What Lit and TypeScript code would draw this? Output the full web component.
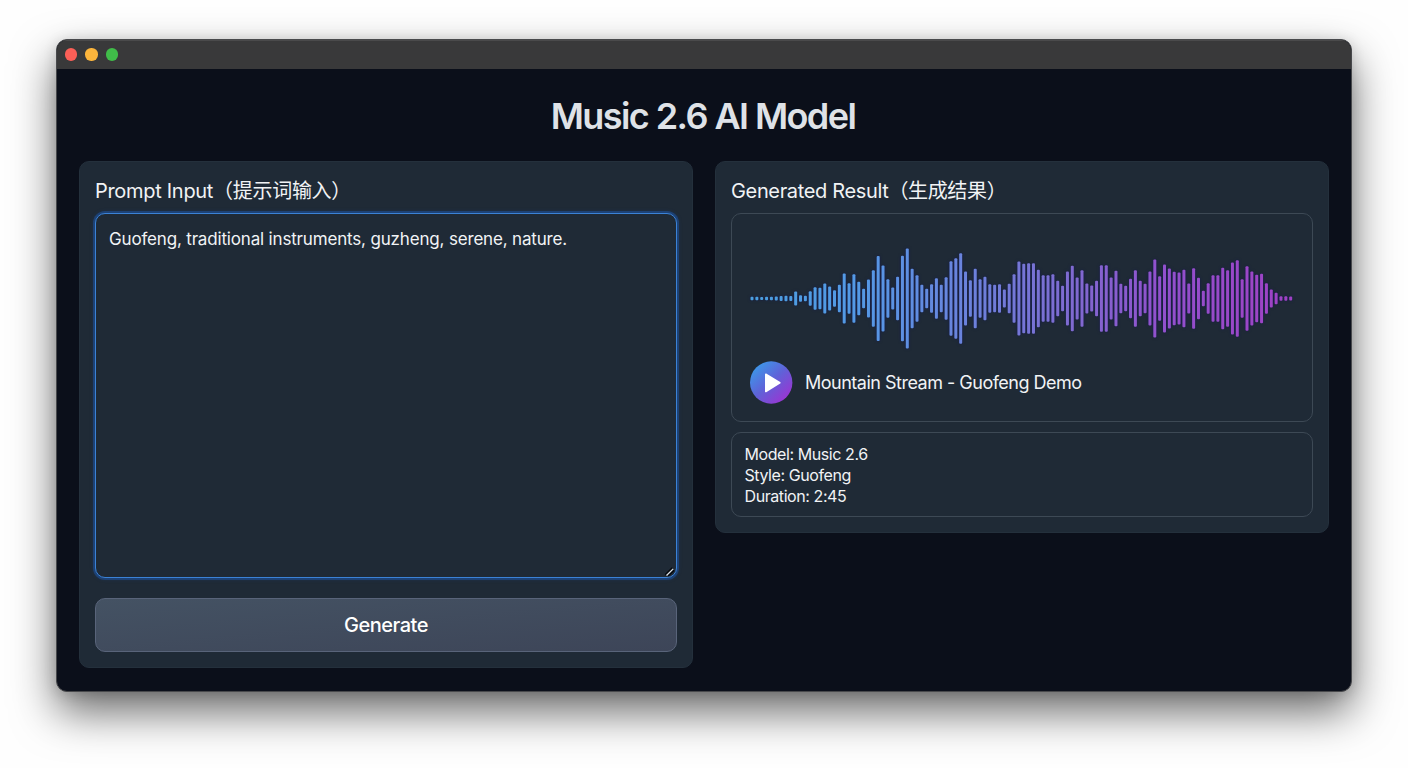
import { LitElement, html, css, svg } from 'lit';
import { customElement, property } from 'lit/decorators.js';

const PITCH = 4.853;
const BAR_WIDTH = 3;

// bar heights in thirds of a pixel
const LEVELS = [
  12, 12, 11, 12, 13, 14, 17, 19, 17, 44, 22, 18, 46, 70, 66, 92, 74, 52, 84, 152,
  94, 148, 102, 60, 116, 172, 257, 200, 118, 68, 132, 258, 302, 180, 142, 84, 60,
  88, 124, 84, 130, 226, 244, 274, 164, 112, 180, 118, 132, 88, 84, 88, 56, 90, 148,
  224, 210, 214, 214, 174, 142, 142, 148, 108, 78, 164, 198, 128, 172, 92, 80, 108,
  202, 202,
  128, 168, 90, 78, 120, 172, 108, 90, 164, 236, 136, 206, 182, 162, 158, 174, 92,
  184, 126, 48, 94, 142, 142, 186, 172, 218, 232, 118, 196, 164, 144, 150, 94, 56,
  36, 16, 16, 14,
];

@customElement('wave-form')
export class WaveForm extends LitElement {
  static styles = css`
    :host {
      display: block;
    }
    svg {
      display: block;
      overflow: visible;
      filter: drop-shadow(0 0 1.5px rgba(16, 20, 80, 0.75));
    }
  `;

  @property({ attribute: false }) levels: number[] = [];

  render() {
    return html`
      <svg width="544" height="104" viewBox="0 0 544 104">
        <defs>
          <linearGradient id="wave" gradientUnits="userSpaceOnUse" x1="0" y1="0" x2="544" y2="0">
            <stop offset="0" stop-color="#4a9fdf" />
            <stop offset="0.2" stop-color="#5499e6" />
            <stop offset="0.4" stop-color="#6b82dc" />
            <stop offset="0.6" stop-color="#8069d0" />
            <stop offset="0.75" stop-color="#9151cd" />
            <stop offset="1" stop-color="#a041c4" />
          </linearGradient>
        </defs>
        ${this.levels.map((level, i) => {
          const h = level / 3 - 0.6;
          return svg`<rect x=${i * PITCH + 0.5} y=${52.5 - h / 2} width=${BAR_WIDTH} height=${h} rx="1" fill="url(#wave)" />`;
        })}
      </svg>
    `;
  }
}

@customElement('prompt-panel')
export class PromptPanel extends LitElement {
  static styles = css`
    :host {
      display: flex;
      flex-direction: column;
      box-sizing: border-box;
      height: 507px;
      padding: 15px;
      border-radius: 10px;
      border: 1px solid #24303c;
      background: #1f2a36;
    }
    h2 {
      margin: 0;
      height: 36px;
      line-height: 28px;
      font-size: 20px;
      font-weight: 400;
      letter-spacing: -0.3px;
      white-space: nowrap;
    }
    .field {
      position: relative;
      height: 365px;
      margin-bottom: 20px;
    }
    textarea {
      display: block;
      box-sizing: border-box;
      width: 100%;
      height: 100%;
      margin: 0;
      padding: 13px;
      resize: none;
      outline: none;
      border: 1.5px solid #3b82d6;
      border-radius: 10px;
      background: #1f2a36;
      box-shadow: 0 0 0 2px rgba(28, 78, 150, 0.6), 0 0 5px rgba(30, 90, 170, 0.4);
      color: #f1f3f5;
      font: inherit;
      font-size: 17px;
      line-height: 24px;
      letter-spacing: -0.17px;
    }
    .grip {
      position: absolute;
      right: 2px;
      bottom: 1px;
    }
    button {
      height: 54px;
      padding: 0;
      border: 1px solid #59647a;
      border-radius: 10px;
      background: linear-gradient(175deg, #445263, #3d4558);
      color: #fff;
      font: inherit;
      font-size: 20px;
      font-weight: 500;
      letter-spacing: -0.5px;
    }
  `;

  render() {
    return html`
      <h2>Prompt Input（提示词输入）</h2>
      <div class="field">
        <textarea spellcheck="false">Guofeng, traditional instruments, guzheng, serene, nature.</textarea>
        <svg class="grip" width="10" height="10" viewBox="0 0 10 10" fill="none">
          <path d="M0.3 7.7 7.3 0.7M3.2 9 9 3.2" stroke="#05080c" stroke-width="1.5" />
          <path d="M1.5 8.5 8.2 1.8" stroke="#dfe5ea" stroke-width="1.2" />
        </svg>
      </div>
      <button>Generate</button>
    `;
  }
}

@customElement('result-panel')
export class ResultPanel extends LitElement {
  static styles = css`
    :host {
      display: flex;
      flex-direction: column;
      box-sizing: border-box;
      height: 372px;
      padding: 15px;
      border-radius: 10px;
      border: 1px solid #24303c;
      background: #1f2a36;
    }
    h2 {
      margin: 0;
      height: 36px;
      line-height: 28px;
      font-size: 20px;
      font-weight: 400;
      letter-spacing: -0.35px;
      white-space: nowrap;
    }
    .box {
      box-sizing: border-box;
      border: 1px solid #3d4955;
      border-radius: 10px;
    }
    .player {
      height: 209px;
      padding: 32px 18px 0;
      margin-bottom: 10px;
    }
    .track {
      display: flex;
      align-items: center;
      gap: 12px;
      margin-top: 11px;
      font-size: 18px;
      letter-spacing: -0.5px;
    }
    .track svg {
      display: block;
    }
    .info {
      height: 85px;
      padding: 11px 12.5px;
      font-size: 16px;
      line-height: 21px;
      letter-spacing: -0.42px;
    }
  `;

  render() {
    return html`
      <h2>Generated Result（生成结果）</h2>
      <div class="box player">
        <wave-form .levels=${LEVELS}></wave-form>
        <div class="track">
          <svg width="43" height="43" viewBox="0 0 43 43">
            <defs>
              <linearGradient id="play" x1="0.1" y1="0.1" x2="0.85" y2="0.9">
                <stop offset="0" stop-color="#3b9aea" />
                <stop offset="0.5" stop-color="#5f62d8" />
                <stop offset="1" stop-color="#9a35d3" />
              </linearGradient>
            </defs>
            <circle cx="21.2" cy="21.5" r="21.2" fill="url(#play)" />
            <path d="M15.8 13.2 29.8 21.8 15.8 30.5Z" fill="#fff" stroke="#fff" stroke-width="1.6" stroke-linejoin="round" />
          </svg>
          <span class="name">Mountain Stream - Guofeng Demo</span>
        </div>
      </div>
      <div class="box info">
        <div class="row">Model: Music 2.6</div>
        <div class="row">Style: Guofeng</div>
        <div class="row">Duration: 2:45</div>
      </div>
    `;
  }
}

@customElement('app-root')
export class AppRoot extends LitElement {
  static styles = css`
    :host {
      display: block;
      box-sizing: border-box;
      width: 1408px;
      height: 768px;
      padding: 39px 56px 0;
      overflow: hidden;
      background: #fefefe;
      color: #f1f3f5;
      font-family: Inter, 'Noto Sans CJK SC', sans-serif;
    }
    .window {
      box-sizing: border-box;
      height: 653px;
      overflow: hidden;
      border: 1px solid #48494c;
      border-radius: 11px;
      background: #0b0f1a;
      box-shadow: 0 20px 44px rgba(0, 0, 0, 0.58), 0 2px 14px rgba(0, 0, 0, 0.14);
    }
    .titlebar {
      display: flex;
      align-items: center;
      gap: 8px;
      box-sizing: border-box;
      height: 29px;
      padding-left: 8px;
      background: #39393a;
      box-shadow: inset 0 1px #4a4a4b;
    }
    .dot {
      width: 12.4px;
      height: 12.4px;
      border-radius: 50%;
    }
    .close {
      background: #fb5f57;
    }
    .minimize {
      background: #fcb53c;
    }
    .zoom {
      background: #40bd49;
    }
    h1 {
      margin: 0;
      height: 92px;
      line-height: 94px;
      text-align: center;
      text-indent: -2px;
      font-size: 36px;
      font-weight: 600;
      letter-spacing: -1.58px;
      color: #dfe2e7;
    }
    .columns {
      display: grid;
      grid-template-columns: 614px 614px;
      gap: 22px;
      align-items: start;
      padding-left: 22px;
    }
  `;

  render() {
    return html`
      <div class="window">
        <div class="titlebar">
          <span class="dot close"></span>
          <span class="dot minimize"></span>
          <span class="dot zoom"></span>
        </div>
        <h1>Music 2.6 AI Model</h1>
        <div class="columns">
          <prompt-panel></prompt-panel>
          <result-panel></result-panel>
        </div>
      </div>
    `;
  }
}
